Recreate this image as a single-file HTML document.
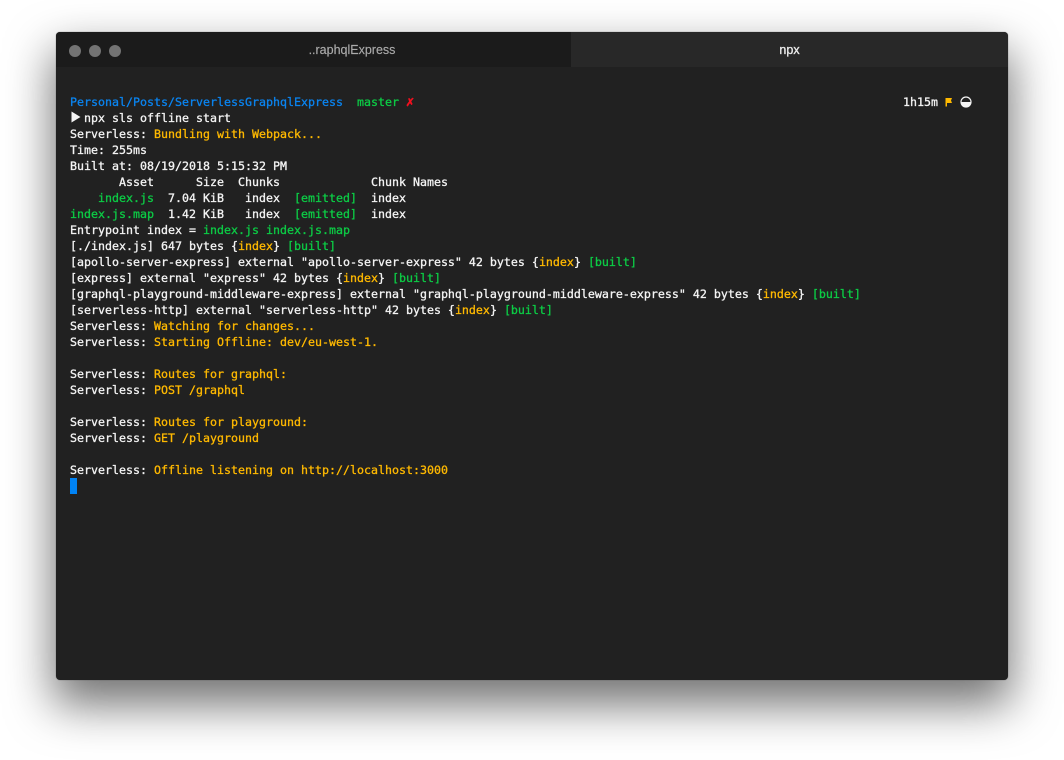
<!DOCTYPE html>
<html>
<head>
<meta charset="utf-8">
<style>
html,body{margin:0;padding:0;background:#fff;width:1064px;height:760px;overflow:hidden}
#win{position:absolute;left:56px;top:32px;width:952px;height:648px;background:#212121;border-radius:4px;box-shadow:0 22px 46px 3px rgba(0,0,0,.55),0 0 1px rgba(0,0,0,.5);overflow:hidden}
.tabL{position:absolute;left:0;top:0;width:515px;height:35px;background:#1b1b1b}
.tabR{position:absolute;left:515px;top:0;width:437px;height:35px;background:#282828}
.dot{position:absolute;top:13px;width:12px;height:12px;border-radius:50%;background:#737373}
.t{position:absolute;top:0;height:35px;font:12.5px/36px "Liberation Sans",sans-serif;text-align:center;-webkit-text-stroke:.15px currentColor}
pre{position:absolute;left:14px;top:62px;margin:0;font-family:"DejaVu Sans Mono","Liberation Mono",monospace;font-size:11.63px;line-height:16px;color:#f4f4f4;-webkit-text-stroke:.3px currentColor}
.y{color:#ffb900}.g{color:#0ccb45}.b{color:#0a84f0}.r{color:#f5101f}
#cursor{position:absolute;left:14px;top:446px;width:7px;height:16px;background:#0083f5}
.rt{position:absolute;left:847px;top:62px;font-family:"DejaVu Sans Mono",monospace;font-size:11.63px;line-height:16px;color:#f4f4f4;-webkit-text-stroke:.3px currentColor}
svg{position:absolute}
</style>
</head>
<body>
<div id="win">
<div class="tabL"></div>
<div class="tabR"></div>
<div class="dot" style="left:13px"></div>
<div class="dot" style="left:33px"></div>
<div class="dot" style="left:53px"></div>
<div class="t" style="left:0;width:592px;color:#ababab">..raphqlExpress</div>
<div class="t" style="left:515px;width:437px;color:#e8e8e8;-webkit-text-stroke:.35px #e8e8e8">npx</div>
<pre><span class="b">Personal/Posts/ServerlessGraphqlExpress</span>  <span class="g">master</span>
  npx sls offline start
Serverless: <span class="y">Bundling with Webpack...</span>
Time: 255ms
Built at: 08/19/2018 5:15:32 PM
       Asset      Size  Chunks             Chunk Names
    <span class="g">index.js</span>  7.04 KiB   index  <span class="g">[emitted]</span>  index
<span class="g">index.js.map</span>  1.42 KiB   index  <span class="g">[emitted]</span>  index
Entrypoint index = <span class="g">index.js index.js.map</span>
[./index.js] 647 bytes {<span class="y">index</span>} <span class="g">[built]</span>
[apollo-server-express] external "apollo-server-express" 42 bytes {<span class="y">index</span>} <span class="g">[built]</span>
[express] external "express" 42 bytes {<span class="y">index</span>} <span class="g">[built]</span>
[graphql-playground-middleware-express] external "graphql-playground-middleware-express" 42 bytes {<span class="y">index</span>} <span class="g">[built]</span>
[serverless-http] external "serverless-http" 42 bytes {<span class="y">index</span>} <span class="g">[built]</span>
Serverless: <span class="y">Watching for changes...</span>
Serverless: <span class="y">Starting Offline: dev/eu-west-1.</span>

Serverless: <span class="y">Routes for graphql:</span>
Serverless: <span class="y">POST /graphql</span>

Serverless: <span class="y">Routes for playground:</span>
Serverless: <span class="y">GET /playground</span>

Serverless: <span class="y">Offline listening on http://localhost:3000</span></pre>
<pre style="left:350px;top:62px;font-size:13.5px;-webkit-text-stroke:.5px #f5101f"><span class="r">✗</span></pre>
<svg style="left:15px;top:79px" width="10" height="13" viewBox="0 0 10 13"><path d="M0.5 0.5L9.5 6L0.5 11.5Z" fill="#f4f4f4"/></svg>
<div class="rt">1h15m</div>
<svg style="left:889px;top:65px" width="8" height="10" viewBox="0 0 8 10"><path d="M0.5 1H7L6 3.5L7 6H2V9.5H0.5Z" fill="#ffb900"/></svg>
<svg style="left:904px;top:64px" width="12" height="12" viewBox="0 0 12 12"><circle cx="6" cy="6" r="5" fill="#212121" stroke="#f4f4f4" stroke-width="1.2"/><path d="M1 6A5 5 0 0 0 11 6Z" fill="#f4f4f4"/></svg>
<div id="cursor"></div>
</div>
</body>
</html>
